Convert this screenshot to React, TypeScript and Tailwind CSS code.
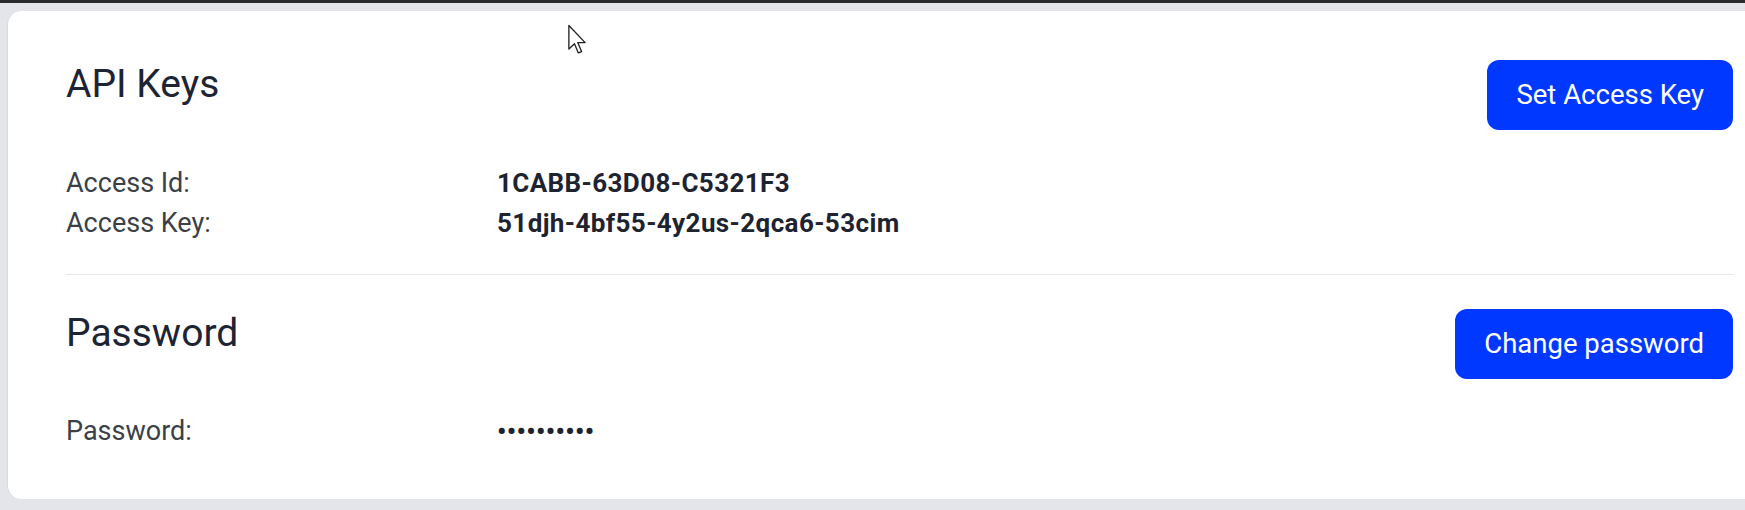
import React from "react";

/* TYPES */
type Field = {
  label: string;
  value: string;
};

const apiFields: Field[] = [
  { label: "Access Id:", value: "1CABB-63D08-C5321F3" },
  { label: "Access Key:", value: "51djh-4bf55-4y2us-2qca6-53cim" },
];

const passwordFields: Field[] = [{ label: "Password:", value: "••••••••••" }];

function FieldRows({ fields }: { fields: Field[] }) {
  return (
    <div className="flex flex-col">
      {fields.map((f) => (
        <div key={f.label} className="flex h-[40px] items-center leading-[40px]">
          <span className="w-[431px] shrink-0 text-[27px] text-[#3a3f48]">{f.label}</span>
          <span className="text-[26px] font-bold tracking-[0.4px] text-[#1e2330]">{f.value}</span>
        </div>
      ))}
    </div>
  );
}

function SectionHeader({ title, action }: { title: string; action: string }) {
  return (
    <div className="flex items-start justify-between">
      <h2 className="mt-[5px] text-[39px] leading-[39px] font-normal text-[#1d2433]">{title}</h2>
      <button className="h-[70px] rounded-[12px] bg-[#0038ff] px-[29px] text-[27.5px] font-normal text-white">
        {action}
      </button>
    </div>
  );
}

export default function App() {
  return (
    <div className="relative h-[510px] w-full overflow-hidden bg-[#e4e5ea] font-['Roboto',sans-serif]">
      {/* top strip of the window above */}
      <div className="h-[3px] w-full bg-[#2b2b2b]" />

      {/* CARD */}
      <div className="ml-[7px] mt-[8px] w-[1786px] rounded-[14px] border-l border-[#d9dbe1] bg-white pl-[58px] pr-[60px] pt-[49px] pb-[48px]">
        <SectionHeader title="API Keys" action="Set Access Key" />
        <div className="mt-[33px]">
          <FieldRows fields={apiFields} />
        </div>

        <div className="mt-[31px] h-px w-full bg-[#e3e5e9]" />

        <div className="mt-[34px]">
          <SectionHeader title="Password" action="Change password" />
        </div>
        <div className="mt-[32px]">
          <FieldRows fields={passwordFields} />
        </div>
      </div>

      {/* mouse pointer */}
      <svg
        className="absolute left-[567px] top-[24px]"
        width="20"
        height="31"
        viewBox="0 0 13 21"
      >
        <path
          d="M1 1 L1 17 L4.8 13.4 L7.4 19.6 L9.6 18.7 L7 12.6 L12 12.6 Z"
          fill="white"
          stroke="#222"
          strokeWidth="0.9"
          strokeLinejoin="round"
        />
      </svg>
    </div>
  );
}
